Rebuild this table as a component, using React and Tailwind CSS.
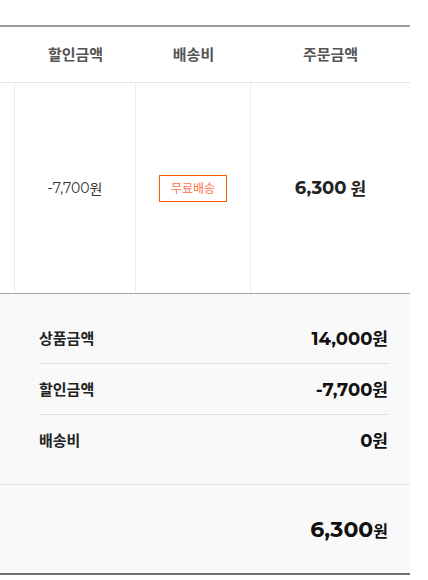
import React from "react";

const NUM = "font-['Montserrat','Inter','Noto_Sans_CJK_KR',sans-serif]";
const KR = "font-['Noto_Sans_CJK_KR','Noto_Sans',sans-serif]";

const summaryRows = [
  { label: "상품금액", value: "14,000" },
  { label: "할인금액", value: "-7,700" },
  { label: "배송비", value: "0" },
];

export default function App() {
  return (
    <div className={`w-[410px] bg-white pt-[25px] ${KR}`}>
      {/* -------- ORDER TABLE -------- */}
      <div className="border-t-2 border-[#9a9ea4]">
        <div className="grid grid-cols-[15px_121px_115px_1fr] h-[56px] items-center border-b border-[#e4e4e8] text-[15px] font-bold text-[#555]">
          <div />
          <div className="text-center">할인금액</div>
          <div className="text-center">배송비</div>
          <div className="text-center">주문금액</div>
        </div>
        <div className="grid grid-cols-[15px_121px_115px_1fr] h-[211px] border-b border-[#a9a9a9]">
          <div className="border-r border-[#ececec]" />
          <div className="border-r border-[#ececec] flex items-center justify-center text-[14px] text-[#333]">
            <span className={NUM}>-7,700</span>
            <span>원</span>
          </div>
          <div className="border-r border-[#ececec] flex items-center justify-center">
            <span className="border border-[#ff5a00] w-[68px] h-[27px] flex items-center justify-center text-[12px] text-[#ff6f4a]">
              무료배송
            </span>
          </div>
          <div className="flex items-center justify-center text-[18px] font-bold text-[#222]">
            <span className={NUM}>6,300</span>
            <span className="ml-1 text-[17px]">원</span>
          </div>
        </div>
      </div>

      {/* -------- SUMMARY -------- */}
      <div className="bg-[#f9f9f9] border-b-2 border-[#6b7079]">
        <div className="pl-[39px] pr-[22px] pt-[19px] pb-[18px]">
          {summaryRows.map((row, i) => (
            <div
              key={row.label}
              className={`flex items-center justify-between h-[51px] ${i < summaryRows.length - 1 ? "border-b border-[#dedee2]" : ""}`}
            >
              <span className="text-[15px] font-bold text-[#222]">{row.label}</span>
              <span className="text-[18px] font-bold text-[#111]">
                <span className={NUM}>{row.value}</span>
                <span className="text-[17px]">원</span>
              </span>
            </div>
          ))}
        </div>
        <div className="border-t border-[#e4e4e4] h-[89px] flex items-center justify-end pr-[22px]">
          <span className="font-bold text-[#111]">
            <span className={`${NUM} text-[22px]`}>6,300</span>
            <span className="text-[16px]">원</span>
          </span>
        </div>
      </div>
    </div>
  );
}
